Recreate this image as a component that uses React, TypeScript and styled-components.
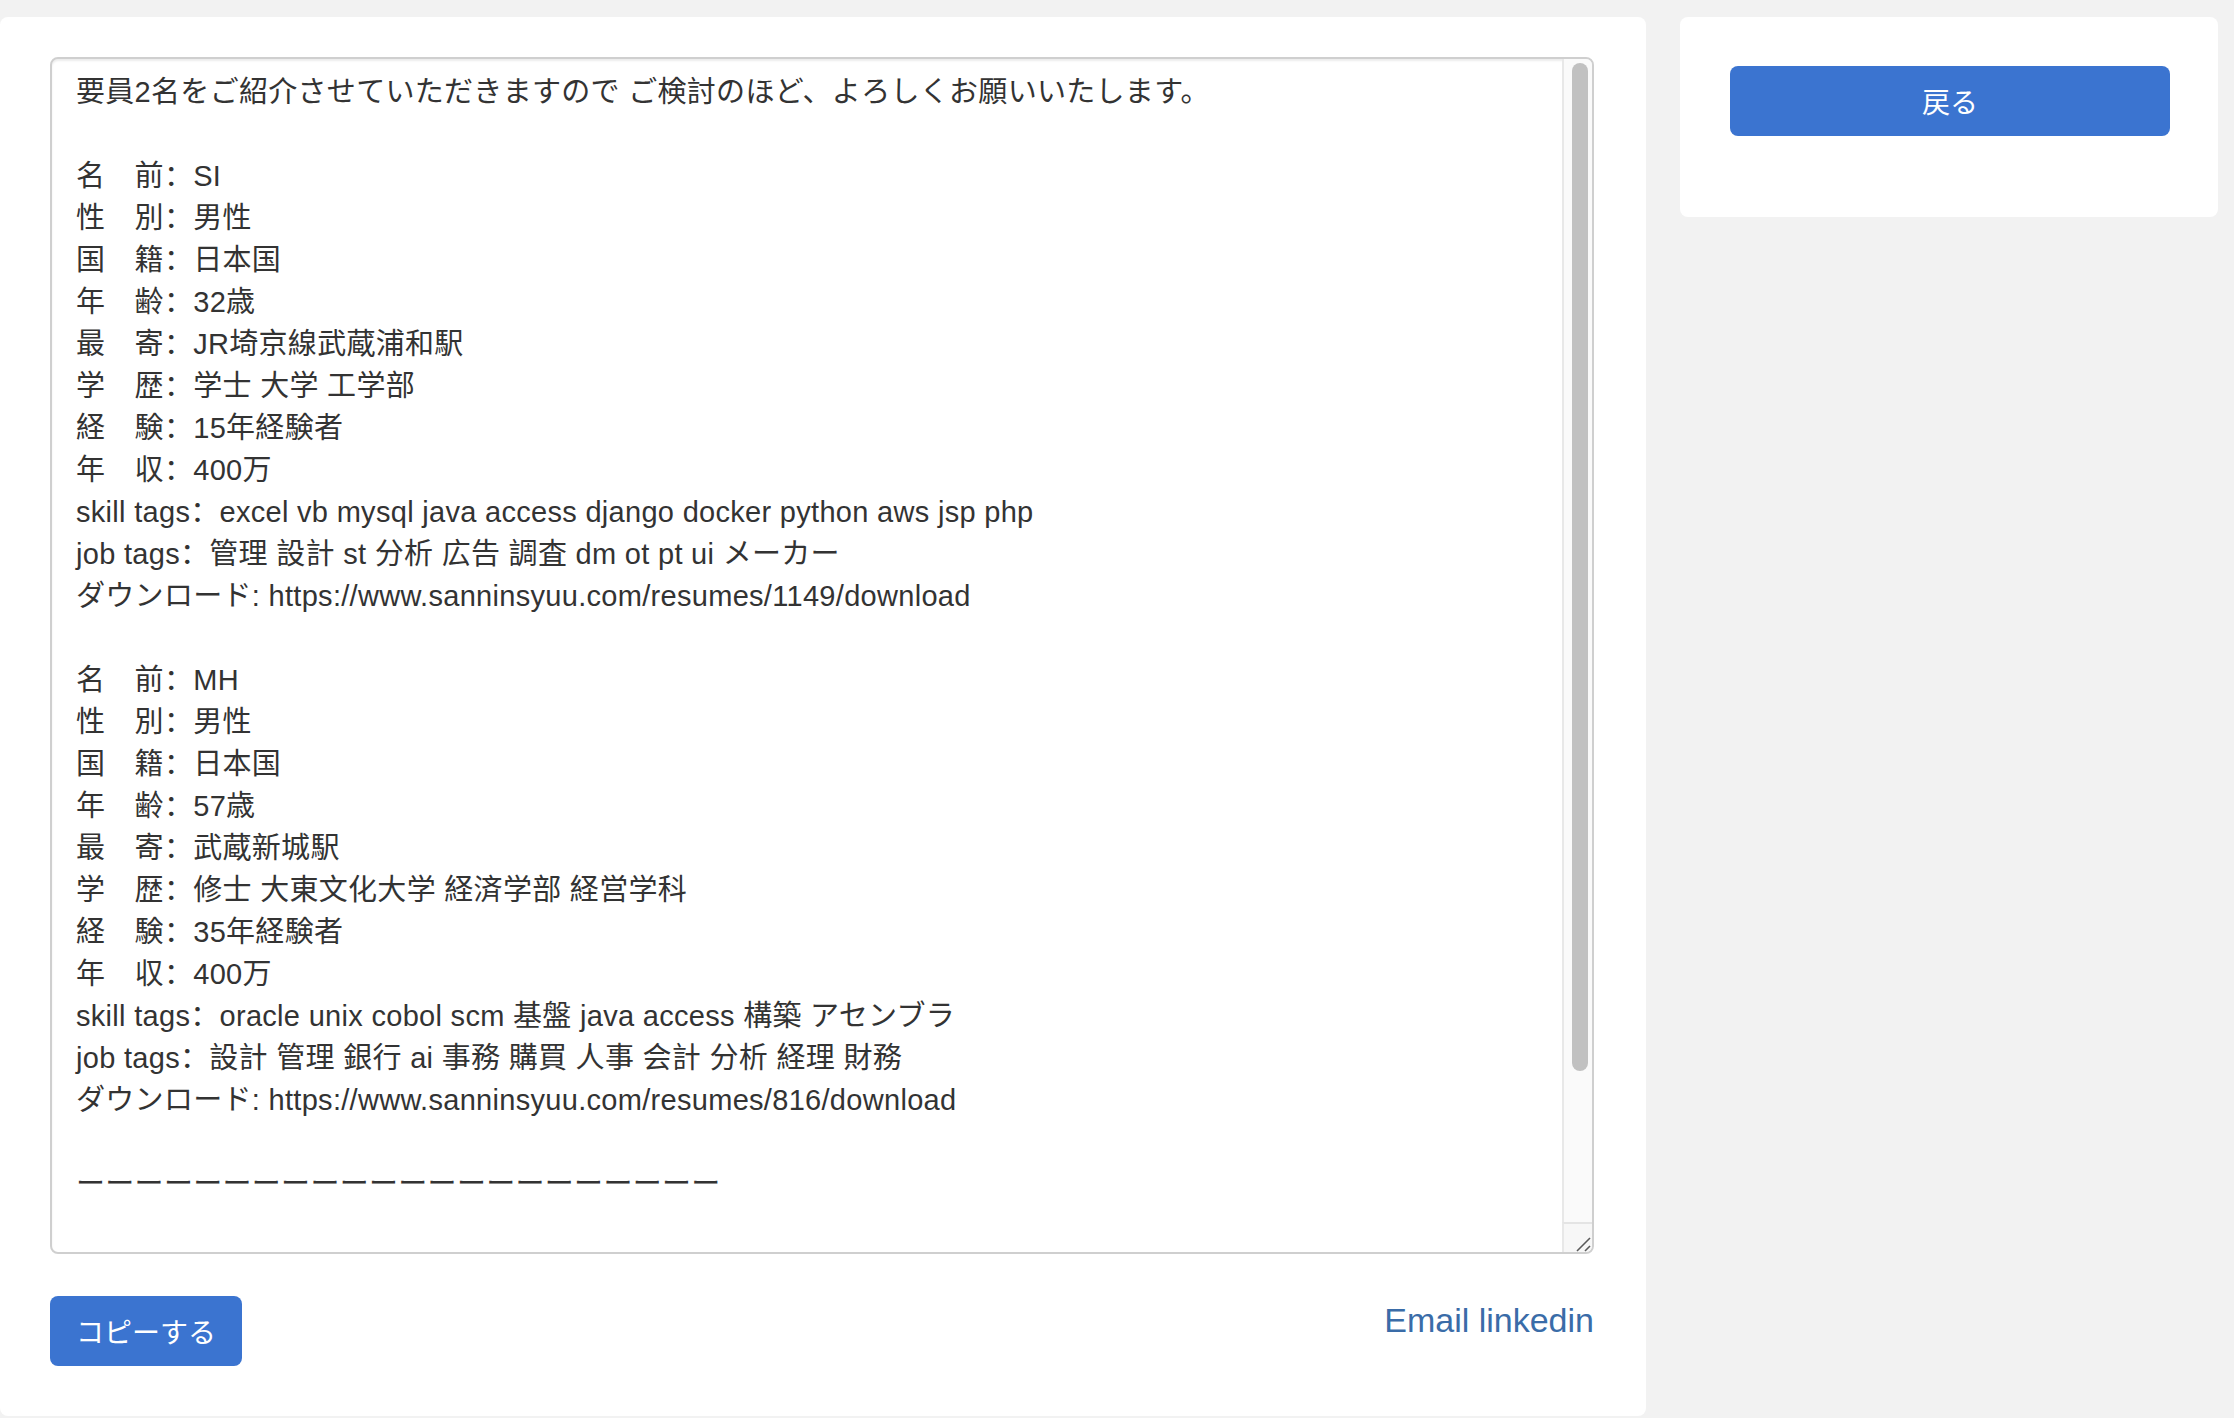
import React from 'react';
import styled, { createGlobalStyle } from 'styled-components';

const GlobalStyle = createGlobalStyle`
  html, body {
    margin: 0;
    padding: 0;
    background: #f2f2f2;
  }
  body {
    font-family: "Liberation Sans", "Noto Sans CJK SC", "Noto Sans CJK JP", sans-serif;
    color: #333;
  }
`;

const Page = styled.div`
  display: grid;
  grid-template-columns: 1fr 538px;
  column-gap: 34px;
  align-items: start;
  box-sizing: border-box;
  width: 2234px;
  height: 1418px;
  padding: 17px 16px 0 0;
`;

const MainCard = styled.section`
  display: flex;
  flex-direction: column;
  background: #fff;
  border-radius: 8px;
  padding: 40px 52px 50px 50px;
`;

const SideCard = styled.aside`
  background: #fff;
  border-radius: 8px;
  padding: 49px 48px 81px 50px;
`;

const EditorWrap = styled.div`
  position: relative;
  height: 1197px;
`;

const MessageBox = styled.textarea`
  display: block;
  box-sizing: border-box;
  width: 100%;
  height: 100%;
  margin: 0;
  padding: 12px 54px 12px 24px;
  border: 2px solid #cfcfcf;
  border-radius: 8px;
  box-shadow: inset 0 2px 2px rgba(0, 0, 0, 0.075);
  font-family: "Liberation Sans", "Noto Sans CJK SC", "Noto Sans CJK JP", sans-serif;
  font-size: 29px;
  line-height: 42px;
  letter-spacing: 0.3px;
  color: #333;
  background: #fff;
  resize: none;
  overflow: hidden;
  outline: none;
  white-space: pre;
`;

/* the textarea's scrollbar, drawn over its right edge */
const ScrollTrack = styled.div`
  position: absolute;
  top: 2px;
  right: 2px;
  bottom: 32px;
  width: 30px;
  box-sizing: border-box;
  padding: 4px 4px 0 8px;
  background: #fafafa;
  border-left: 2px solid #e8e8e8;
  border-top-right-radius: 6px;
`;

const ScrollThumb = styled.div`
  width: 16px;
  height: 1008px;
  border-radius: 8px;
  background: #c1c1c1;
`;

const Resizer = styled.div`
  position: absolute;
  right: 2px;
  bottom: 2px;
  width: 30px;
  height: 30px;
  box-sizing: border-box;
  background: #f7f7f7;
  border-left: 2px solid #e8e8e8;
  border-top: 2px solid #e4e4e4;
  border-bottom-right-radius: 6px;

  svg {
    display: block;
  }
`;

const Actions = styled.div`
  display: flex;
  justify-content: space-between;
  align-items: flex-start;
  margin-top: 42px;
`;

const Button = styled.button<{ $block?: boolean }>`
  display: ${(p) => (p.$block ? 'block' : 'inline-block')};
  width: ${(p) => (p.$block ? '100%' : 'auto')};
  height: 70px;
  margin: 0;
  padding: 0 26px;
  border: none;
  border-radius: 8px;
  background: #3b74d0;
  color: #fff;
  font-family: "Noto Sans CJK JP", sans-serif;
  font-size: 28px;
  line-height: 42px;
  cursor: pointer;
`;

const TextLink = styled.a`
  color: #3a6ca8;
  font-family: "Liberation Sans", sans-serif;
  font-size: 34px;
  line-height: 48px;
  text-decoration: none;
`;

const lines = [
  '要員2名をご紹介させていただきますので ご検討のほど、よろしくお願いいたします。',
  '',
  '名　前：SI',
  '性　別：男性',
  '国　籍：日本国',
  '年　齢：32歳',
  '最　寄：JR埼京線武蔵浦和駅',
  '学　歴：学士 大学 工学部',
  '経　験：15年経験者',
  '年　収：400万',
  'skill tags：excel vb mysql java access django docker python aws jsp php',
  'job tags：管理 設計 st 分析 広告 調査 dm ot pt ui メーカー',
  'ダウンロード: https://www.sanninsyuu.com/resumes/1149/download',
  '',
  '名　前：MH',
  '性　別：男性',
  '国　籍：日本国',
  '年　齢：57歳',
  '最　寄：武蔵新城駅',
  '学　歴：修士 大東文化大学 経済学部 経営学科',
  '経　験：35年経験者',
  '年　収：400万',
  'skill tags：oracle unix cobol scm 基盤 java access 構築 アセンブラ',
  'job tags：設計 管理 銀行 ai 事務 購買 人事 会計 分析 経理 財務',
  'ダウンロード: https://www.sanninsyuu.com/resumes/816/download',
  '',
  'ーーーーーーーーーーーーーーーーーーーーーー',
  '',
  '以上、よろしくお願いいたします。',
  'サンニンシュウ 営業部',
  'Mail: info@sanninsyuu.com',
  'URL: https://www.sanninsyuu.com',
];

export default function App() {
  return (
    <>
      <GlobalStyle />
      <Page>
        <MainCard>
          <EditorWrap>
            <MessageBox readOnly defaultValue={lines.join('\n')} />
            <ScrollTrack>
              <ScrollThumb />
            </ScrollTrack>
            <Resizer>
              <svg width="28" height="28" viewBox="0 0 28 28">
                <line x1="13" y1="27" x2="26" y2="14" stroke="#5a5a5a" strokeWidth="1.6" />
                <line x1="21" y1="27" x2="26" y2="22" stroke="#5a5a5a" strokeWidth="1.6" />
              </svg>
            </Resizer>
          </EditorWrap>
          <Actions>
            <Button type="button">コピーする</Button>
            <TextLink href="#">Email linkedin</TextLink>
          </Actions>
        </MainCard>
        <SideCard>
          <Button type="button" $block>
            戻る
          </Button>
        </SideCard>
      </Page>
    </>
  );
}
